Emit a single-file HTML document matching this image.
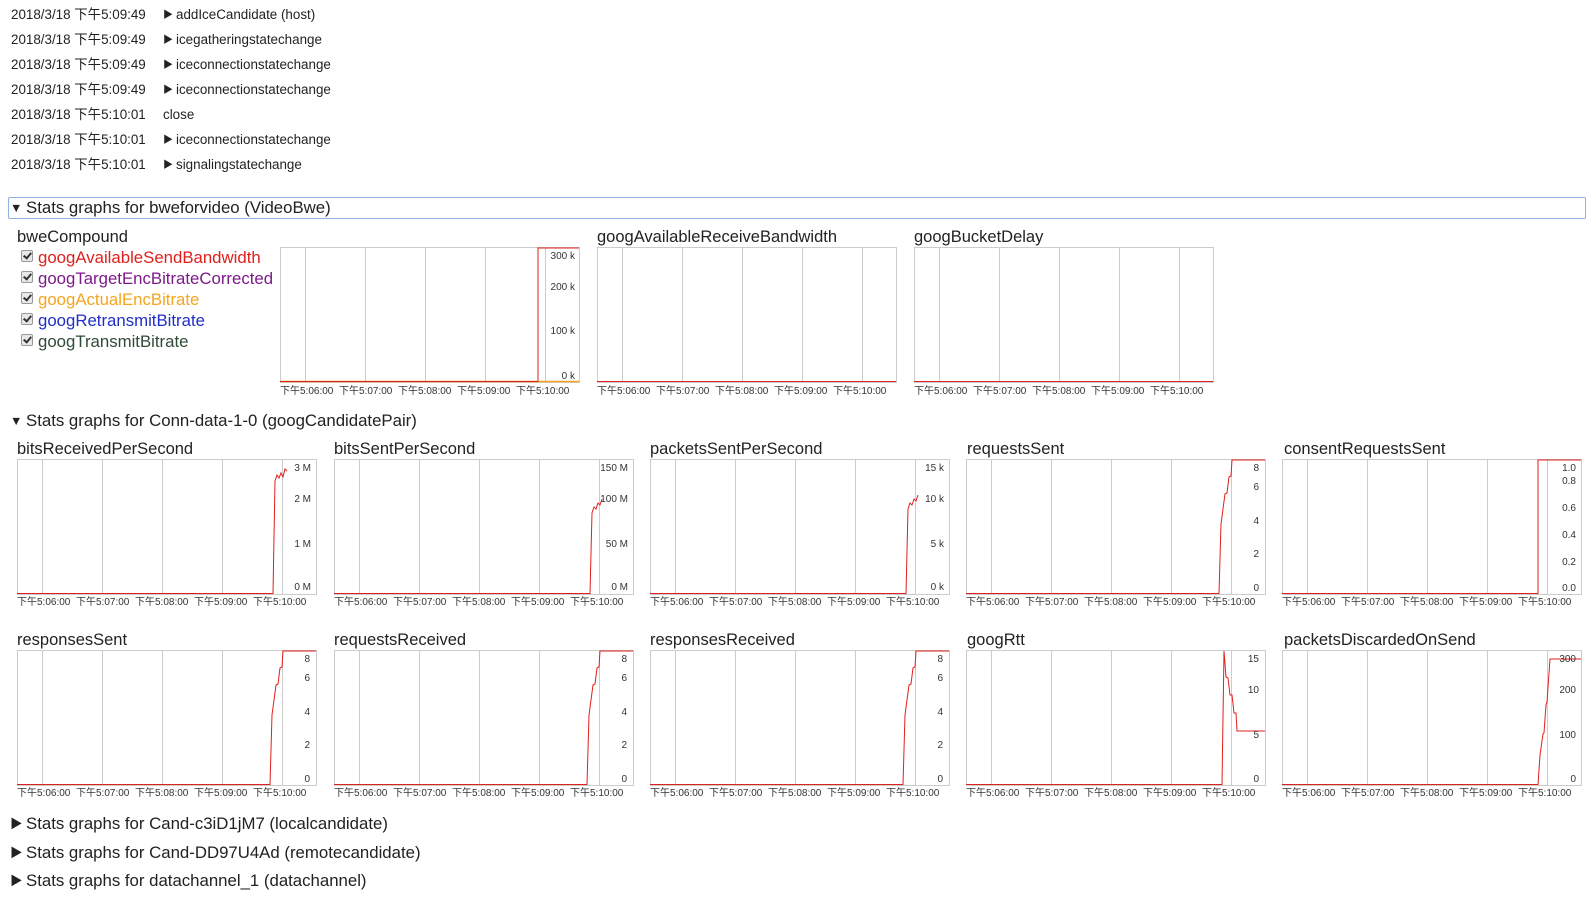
<!DOCTYPE html>
<html><head><meta charset="utf-8">
<style>
body{margin:0;width:1595px;height:900px;background:#fff;font-family:"Liberation Sans","Noto Sans CJK SC",sans-serif;color:#222;position:relative;overflow:hidden}
.a{position:absolute;white-space:nowrap}
.log{font-size:13.4px;line-height:16px}
.h{font-size:16.8px;line-height:20px}
.t{font-size:16.5px;line-height:20px}
.lg{font-size:16.8px;line-height:20px}
.tr{display:inline-block;font-size:12.5px;width:16px;vertical-align:1px}
.ts{display:inline-block;font-size:10px;width:13px;vertical-align:1px}
.cb{display:inline-block;width:10px;height:10px;border:1px solid #999;background:#e8e8e8;border-radius:2px;margin-right:5px;vertical-align:1px;position:relative}
.cb:after{content:"";position:absolute;left:3px;top:0px;width:3px;height:6px;border:solid #333;border-width:0 2px 2px 0;transform:rotate(40deg)}
svg text{font-family:"Liberation Sans","Noto Sans CJK SC",sans-serif}
</style></head><body>

<div class="a log" style="left:11px;top:7px">2018/3/18 下午5:09:49</div><div class="a log" style="left:163px;top:7px"><span class="ts">▶</span>addIceCandidate (host)</div>
<div class="a log" style="left:11px;top:32px">2018/3/18 下午5:09:49</div><div class="a log" style="left:163px;top:32px"><span class="ts">▶</span>icegatheringstatechange</div>
<div class="a log" style="left:11px;top:57px">2018/3/18 下午5:09:49</div><div class="a log" style="left:163px;top:57px"><span class="ts">▶</span>iceconnectionstatechange</div>
<div class="a log" style="left:11px;top:82px">2018/3/18 下午5:09:49</div><div class="a log" style="left:163px;top:82px"><span class="ts">▶</span>iceconnectionstatechange</div>
<div class="a log" style="left:11px;top:107px">2018/3/18 下午5:10:01</div><div class="a log" style="left:163px;top:107px">close</div>
<div class="a log" style="left:11px;top:132px">2018/3/18 下午5:10:01</div><div class="a log" style="left:163px;top:132px"><span class="ts">▶</span>iceconnectionstatechange</div>
<div class="a log" style="left:11px;top:157px">2018/3/18 下午5:10:01</div><div class="a log" style="left:163px;top:157px"><span class="ts">▶</span>signalingstatechange</div>

<div class="a" style="left:8px;top:197px;width:1576px;height:20px;border:1px solid #8fb2e6;border-radius:2px"></div>
<div class="a h" style="left:10px;top:198px"><span class="tr">▼</span>Stats graphs for bweforvideo (VideoBwe)</div>

<div class="a t" style="left:17px;top:227px">bweCompound</div>
<div class="a lg" style="left:21px;top:248px;color:#e0201c"><span class="cb"></span>googAvailableSendBandwidth</div>
<div class="a lg" style="left:21px;top:269px;color:#7d1a8a"><span class="cb"></span>googTargetEncBitrateCorrected</div>
<div class="a lg" style="left:21px;top:290px;color:#f5a51e"><span class="cb"></span>googActualEncBitrate</div>
<div class="a lg" style="left:21px;top:311px;color:#1f2fc8"><span class="cb"></span>googRetransmitBitrate</div>
<div class="a lg" style="left:21px;top:332px;color:#2f4a36"><span class="cb"></span>googTransmitBitrate</div>

<div class="a t" style="left:597px;top:227px">googAvailableReceiveBandwidth</div>
<div class="a t" style="left:914px;top:227px">googBucketDelay</div>

<div class="a h" style="left:10px;top:411px"><span class="tr">▼</span>Stats graphs for Conn-data-1-0 (googCandidatePair)</div>
<div class="a t" style="left:17px;top:439px">bitsReceivedPerSecond</div>
<div class="a t" style="left:334px;top:439px">bitsSentPerSecond</div>
<div class="a t" style="left:650px;top:439px">packetsSentPerSecond</div>
<div class="a t" style="left:967px;top:439px">requestsSent</div>
<div class="a t" style="left:1284px;top:439px">consentRequestsSent</div>
<div class="a t" style="left:17px;top:630px">responsesSent</div>
<div class="a t" style="left:334px;top:630px">requestsReceived</div>
<div class="a t" style="left:650px;top:630px">responsesReceived</div>
<div class="a t" style="left:967px;top:630px">googRtt</div>
<div class="a t" style="left:1284px;top:630px">packetsDiscardedOnSend</div>

<div class="a h" style="left:10px;top:814px"><span class="tr">▶</span>Stats graphs for Cand-c3iD1jM7 (localcandidate)</div>
<div class="a h" style="left:10px;top:843px"><span class="tr">▶</span>Stats graphs for Cand-DD97U4Ad (remotecandidate)</div>
<div class="a h" style="left:10px;top:871px"><span class="tr">▶</span>Stats graphs for datachannel_1 (datachannel)</div>

<svg class="a" style="left:0;top:0" width="1595" height="900" font-size="10" fill="#333">
<defs>
<g id="g">
<rect x="0.5" y="0.5" width="299" height="135" fill="none" stroke="#ccc"/>
<path d="M25.5 0V135M85.5 0V135M145.5 0V135M205.5 0V135M265.5 0V135" stroke="#ccc"/>
</g>
</defs>

<g transform="translate(280,247)">
<use href="#g"/>
<path d="M0 134.5H299" stroke="#f5a51e" stroke-width="1.5"/>
<path d="M0 134.5H258V1H299" stroke="#e0201c" fill="none"/>
<g text-anchor="end"><text x="295" y="12">300 k</text><text x="295" y="43">200 k</text><text x="295" y="87">100 k</text><text x="295" y="132">0 k</text></g>
<g><text x="0" y="147">下午5:06:00</text><text x="59" y="147">下午5:07:00</text><text x="118" y="147">下午5:08:00</text><text x="177" y="147">下午5:09:00</text><text x="236" y="147">下午5:10:00</text></g>
</g>
<g transform="translate(597,247)">
<use href="#g"/><path d="M0 134.5H299" stroke="#e0201c"/>
<g><text x="0" y="147">下午5:06:00</text><text x="59" y="147">下午5:07:00</text><text x="118" y="147">下午5:08:00</text><text x="177" y="147">下午5:09:00</text><text x="236" y="147">下午5:10:00</text></g>
</g>
<g transform="translate(914,247)">
<use href="#g"/><path d="M0 134.5H299" stroke="#e0201c"/>
<g><text x="0" y="147">下午5:06:00</text><text x="59" y="147">下午5:07:00</text><text x="118" y="147">下午5:08:00</text><text x="177" y="147">下午5:09:00</text><text x="236" y="147">下午5:10:00</text></g>
</g>

<g transform="translate(17,459)">
<use href="#g"/><path d="M0 134.5H256L258 22L260 16L262 19L264 14L266 18L268 10L270 12" stroke="#e0201c" fill="none"/>
<g text-anchor="end"><text x="294" y="12">3 M</text><text x="294" y="43">2 M</text><text x="294" y="88">1 M</text><text x="294" y="131">0 M</text></g>
<g><text x="0" y="146">下午5:06:00</text><text x="59" y="146">下午5:07:00</text><text x="118" y="146">下午5:08:00</text><text x="177" y="146">下午5:09:00</text><text x="236" y="146">下午5:10:00</text></g>
</g>
<g transform="translate(334,459)">
<use href="#g"/><path d="M0 134.5H256L258 54L260 48L262 50L264 44L266 46L268 40" stroke="#e0201c" fill="none"/>
<g text-anchor="end"><text x="294" y="12">150 M</text><text x="294" y="43">100 M</text><text x="294" y="88">50 M</text><text x="294" y="131">0 M</text></g>
<g><text x="0" y="146">下午5:06:00</text><text x="59" y="146">下午5:07:00</text><text x="118" y="146">下午5:08:00</text><text x="177" y="146">下午5:09:00</text><text x="236" y="146">下午5:10:00</text></g>
</g>
<g transform="translate(650,459)">
<use href="#g"/><path d="M0 134.5H256L258 50L260 44L262 46L264 40L266 42L268 36" stroke="#e0201c" fill="none"/>
<g text-anchor="end"><text x="294" y="12">15 k</text><text x="294" y="43">10 k</text><text x="294" y="88">5 k</text><text x="294" y="131">0 k</text></g>
<g><text x="0" y="146">下午5:06:00</text><text x="59" y="146">下午5:07:00</text><text x="118" y="146">下午5:08:00</text><text x="177" y="146">下午5:09:00</text><text x="236" y="146">下午5:10:00</text></g>
</g>
<g transform="translate(966,459)">
<use href="#g"/><path d="M0 134.5H253L255 65L257 50L259 35L261 34L263 18L265 17L266 1H299" stroke="#e0201c" fill="none"/>
<g text-anchor="end"><text x="293" y="12">8</text><text x="293" y="31">6</text><text x="293" y="65">4</text><text x="293" y="98">2</text><text x="293" y="132">0</text></g>
<g><text x="0" y="146">下午5:06:00</text><text x="59" y="146">下午5:07:00</text><text x="118" y="146">下午5:08:00</text><text x="177" y="146">下午5:09:00</text><text x="236" y="146">下午5:10:00</text></g>
</g>
<g transform="translate(1282,459)">
<use href="#g"/><path d="M0 134.5H256V1H299" stroke="#e0201c" fill="none"/>
<g text-anchor="end"><text x="294" y="12">1.0</text><text x="294" y="25">0.8</text><text x="294" y="52">0.6</text><text x="294" y="79">0.4</text><text x="294" y="106">0.2</text><text x="294" y="132">0.0</text></g>
<g><text x="0" y="146">下午5:06:00</text><text x="59" y="146">下午5:07:00</text><text x="118" y="146">下午5:08:00</text><text x="177" y="146">下午5:09:00</text><text x="236" y="146">下午5:10:00</text></g>
</g>

<g transform="translate(17,650)">
<use href="#g"/><path d="M0 134.5H253L255 65L257 50L259 35L261 34L263 18L265 17L266 1H299" stroke="#e0201c" fill="none"/>
<g text-anchor="end"><text x="293" y="12">8</text><text x="293" y="31">6</text><text x="293" y="65">4</text><text x="293" y="98">2</text><text x="293" y="132">0</text></g>
<g><text x="0" y="146">下午5:06:00</text><text x="59" y="146">下午5:07:00</text><text x="118" y="146">下午5:08:00</text><text x="177" y="146">下午5:09:00</text><text x="236" y="146">下午5:10:00</text></g>
</g>
<g transform="translate(334,650)">
<use href="#g"/><path d="M0 134.5H253L255 65L257 50L259 35L261 34L263 18L265 17L266 1H299" stroke="#e0201c" fill="none"/>
<g text-anchor="end"><text x="293" y="12">8</text><text x="293" y="31">6</text><text x="293" y="65">4</text><text x="293" y="98">2</text><text x="293" y="132">0</text></g>
<g><text x="0" y="146">下午5:06:00</text><text x="59" y="146">下午5:07:00</text><text x="118" y="146">下午5:08:00</text><text x="177" y="146">下午5:09:00</text><text x="236" y="146">下午5:10:00</text></g>
</g>
<g transform="translate(650,650)">
<use href="#g"/><path d="M0 134.5H253L255 65L257 50L259 35L261 34L263 18L265 17L266 1H299" stroke="#e0201c" fill="none"/>
<g text-anchor="end"><text x="293" y="12">8</text><text x="293" y="31">6</text><text x="293" y="65">4</text><text x="293" y="98">2</text><text x="293" y="132">0</text></g>
<g><text x="0" y="146">下午5:06:00</text><text x="59" y="146">下午5:07:00</text><text x="118" y="146">下午5:08:00</text><text x="177" y="146">下午5:09:00</text><text x="236" y="146">下午5:10:00</text></g>
</g>
<g transform="translate(966,650)">
<use href="#g"/><path d="M0 134.5H256L258 1L260 27L262 28L264 45L266 45L268 63L270 63L271 81H299" stroke="#e0201c" fill="none"/>
<g text-anchor="end"><text x="293" y="12">15</text><text x="293" y="43">10</text><text x="293" y="88">5</text><text x="293" y="132">0</text></g>
<g><text x="0" y="146">下午5:06:00</text><text x="59" y="146">下午5:07:00</text><text x="118" y="146">下午5:08:00</text><text x="177" y="146">下午5:09:00</text><text x="236" y="146">下午5:10:00</text></g>
</g>
<g transform="translate(1282,650)">
<use href="#g"/><path d="M0 134.5H256L258 105L261 84L262 83L264 55L265 52L268 9H299" stroke="#e0201c" fill="none"/>
<g text-anchor="end"><text x="294" y="12">300</text><text x="294" y="43">200</text><text x="294" y="88">100</text><text x="294" y="132">0</text></g>
<g><text x="0" y="146">下午5:06:00</text><text x="59" y="146">下午5:07:00</text><text x="118" y="146">下午5:08:00</text><text x="177" y="146">下午5:09:00</text><text x="236" y="146">下午5:10:00</text></g>
</g>
</svg>
</body></html>
